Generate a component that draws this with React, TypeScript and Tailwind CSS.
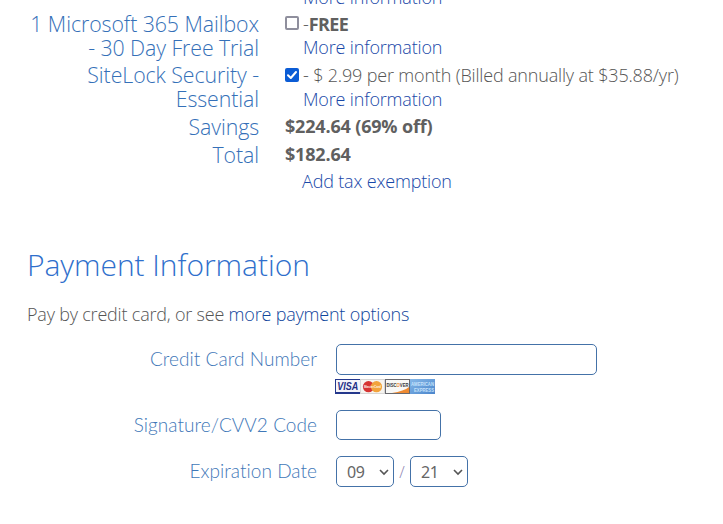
import { useState, type ReactNode } from "react";

interface OrderRowProps {
  label?: ReactNode;
  className?: string;
  valueClassName?: string;
  children: ReactNode;
}

const OrderRow = ({ label, className = "", valueClassName = "leading-6", children }: OrderRowProps) => (
  <div className={`flex ${className}`}>
    <div className="w-[259px] shrink-0 text-right text-[21.3px] leading-6 tracking-[-0.07px] text-[#3570b8]">{label}</div>
    <div className={`ml-[26px] text-[18px] tracking-[-0.17px] whitespace-nowrap text-[#555] ${valueClassName}`}>
      {children}
    </div>
  </div>
);

const Checkbox = ({ checked, onChange }: { checked: boolean; onChange: () => void }) => (
  <button
    role="checkbox"
    aria-checked={checked}
    onClick={onChange}
    className={`mr-1 flex h-[14px] w-[14px] items-center justify-center rounded-[2px] ${
      checked ? "bg-[#0b5cd5]" : "mb-0.5 border-2 border-[#8f8f9d] bg-white"
    }`}
  >
    {checked && (
      <svg viewBox="0 0 14 14" className="h-[14px] w-[14px]" fill="none" stroke="#fff" strokeWidth="2">
        <path d="M3 7.3 5.8 10 11 4" strokeLinecap="round" strokeLinejoin="round" />
      </svg>
    )}
  </button>
);

const MoreInfo = () => (
  <a href="#" className="ml-[18px] block h-6 text-[#1848a8]">
    More information
  </a>
);

const FieldLabel = ({ children }: { children: ReactNode }) => (
  <label className="mr-[19px] w-[317px] shrink-0 text-right font-['Lato',sans-serif] text-[19px] tracking-[0.05px] text-[#3f78b8]">
    {children}
  </label>
);

const DateSelect = ({ value }: { value: string }) => (
  <button className="flex h-[31px] w-[58px] items-center justify-between rounded-[5px] border border-[#4472a8] pr-1 pl-[10px] font-['Noto_Sans',sans-serif] text-[16px] font-normal tracking-[-0.3px] text-[#666]">
    {value}
    <svg viewBox="0 0 10 8" className="h-2 w-[10px]" fill="none" stroke="#555" strokeWidth="1.6">
      <path d="M1 2 5 6 9 2" />
    </svg>
  </button>
);

const CardLogos = () => (
  <svg viewBox="0 0 100 15" className="h-[15px] w-[100px]" aria-label="Accepted cards">
    <defs>
      <linearGradient id="amex" x1="0" y1="0" x2="1" y2="1">
        <stop offset="0" stopColor="#86b8e8" />
        <stop offset="1" stopColor="#4b86cc" />
      </linearGradient>
    </defs>
    {/* Visa */}
    <rect width="25" height="15" fill="#24388c" />
    <rect x="1" y="1" width="24" height="12" fill="#f5f5fa" />
    <text x="2.2" y="10.7" textLength="21" lengthAdjust="spacingAndGlyphs" fontFamily="Liberation Sans" fontSize="10.5" fontWeight="700" fontStyle="italic" fill="#1e2f86">
      VISA
    </text>
    {/* MasterCard */}
    <rect x="25" width="25" height="15" fill="#d7d6d5" />
    <rect x="26" y="1" width="23" height="13" fill="#f6f4f0" />
    <circle cx="33.5" cy="7.7" r="5.6" fill="#d63432" />
    <circle cx="41.5" cy="7.7" r="5.6" fill="#f2a33c" />
    <text x="29" y="9.3" textLength="17" lengthAdjust="spacingAndGlyphs" fontFamily="Liberation Sans" fontSize="4" fontWeight="700" fill="#fff4e8">
      MasterCard
    </text>
    {/* Discover */}
    <rect x="50" width="25" height="15" fill="#69696e" />
    <rect x="51" y="1" width="23" height="13" fill="#f8f8f6" />
    <path d="M57 14 Q69 12 74 8 V14Z" fill="#ee8a32" />
    <text x="51.5" y="7.7" textLength="22" lengthAdjust="spacingAndGlyphs" fontFamily="Liberation Sans" fontSize="5.3" fontWeight="700" fill="#37363b">
      DISC<tspan fill="#ee8a32">O</tspan>VER
    </text>
    {/* American Express */}
    <rect x="75" width="25" height="15" fill="url(#amex)" />
    <text x="76" y="6.7" textLength="23" lengthAdjust="spacingAndGlyphs" fontFamily="Liberation Sans" fontSize="5" fontWeight="700" fill="#c5e2fb">
      AMERICAN
    </text>
    <text x="79" y="12.9" textLength="20" lengthAdjust="spacingAndGlyphs" fontFamily="Liberation Sans" fontSize="5" fontWeight="700" fill="#c5e2fb">
      EXPRESS
    </text>
  </svg>
);

const inputClass = "rounded-[5px] border border-[#4472a8] bg-white px-2 outline-none";

export default function App() {
  const [mailbox, setMailbox] = useState(false);
  const [siteLock, setSiteLock] = useState(true);

  return (
    <div className="h-[524px] w-[723px] overflow-hidden bg-white font-['Open_Sans',sans-serif] font-light">
      {/* Order summary */}
      <div className="-mt-[15px]">
        <OrderRow className="h-[27px]">
          <MoreInfo />
        </OrderRow>
        <OrderRow
          className="h-[51px]"
          valueClassName="leading-[22px]"
          label={
            <>
              1 Microsoft 365 Mailbox
              <br />- 30 Day Free Trial
            </>
          }
        >
          <div className="flex h-6 items-center">
            <Checkbox checked={mailbox} onChange={() => setMailbox(!mailbox)} />
            <span>
              -<strong className="font-bold tracking-[-0.6px] text-[#606060]">FREE</strong>
            </span>
          </div>
          <MoreInfo />
        </OrderRow>
        <OrderRow
          className="h-[52px]"
          label={
            <>
              SiteLock Security -<br />
              Essential
            </>
          }
        >
          <div className="flex h-6 items-center">
            <Checkbox checked={siteLock} onChange={() => setSiteLock(!siteLock)} />
            <span>- $ 2.99 per month (Billed annually at $35.88/yr)</span>
          </div>
          <MoreInfo />
        </OrderRow>
        <OrderRow className="h-7" valueClassName="leading-[22px]" label="Savings">
          <strong className="font-bold text-[#606060]">$224.64 (69% off)</strong>
        </OrderRow>
        <OrderRow className="h-[27px]" valueClassName="leading-[22px]" label="Total">
          <strong className="font-bold text-[#606060]">$182.64</strong>
        </OrderRow>
        <OrderRow className="h-6" valueClassName="leading-[22px]">
          <a href="#" className="ml-[17px] text-[#1848a8]">
            Add tax exemption
          </a>
        </OrderRow>
      </div>

      {/* Payment */}
      <h2 className="mt-[51px] ml-[27px] text-[30px] leading-10 tracking-[-0.05px] text-[#2f6fcc]">
        Payment Information
      </h2>
      <p className="mt-[17px] ml-[27px] text-[18px] leading-6 tracking-[-0.2px] text-[#555]">
        Pay by credit card, or see{" "}
        <a href="#" className="text-[#0f469c]">
          more payment options
        </a>
      </p>

      <div className="mt-[18px] flex items-center">
        <FieldLabel>Credit Card Number</FieldLabel>
        <input aria-label="Credit card number" className={`h-[31px] w-[261px] ${inputClass}`} />
      </div>
      <div className="mt-1 ml-[335px] flex">
        <CardLogos />
      </div>
      <div className="mt-4 flex items-center">
        <FieldLabel>Signature/CVV2 Code</FieldLabel>
        <input aria-label="CVV2 code" className={`h-[30px] w-[105px] ${inputClass}`} />
      </div>
      <div className="mt-4 flex items-center">
        <FieldLabel>Expiration Date</FieldLabel>
        <DateSelect value="09" />
        <span className="w-4 text-center text-[16px] text-[#8d7fb0]">/</span>
        <DateSelect value="21" />
      </div>
    </div>
  );
}
